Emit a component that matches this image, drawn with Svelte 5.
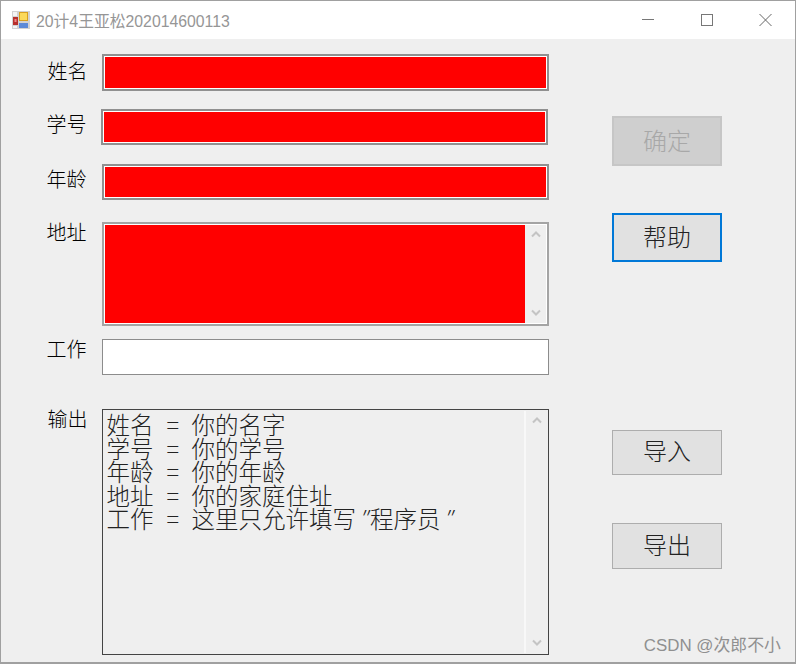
<script>
  const fields = [
    { label: '姓名', cls: 'name', filled: true },
    { label: '学号', cls: 'sid', filled: true },
    { label: '年龄', cls: 'age', filled: true }
  ];
  const output = [
    ['姓名', '你的名字'],
    ['学号', '你的学号'],
    ['年龄', '你的年龄'],
    ['地址', '你的家庭住址'],
    ['工作', '这里只允许填写', '程序员']
  ];
</script>

<div class="window">
  <header class="titlebar">
    <svg class="appicon" width="20" height="20" viewBox="0 0 20 20">
      <rect x="1" y="1" width="18" height="18" fill="#d2d2d2" />
      <rect x="2" y="2" width="4" height="4" fill="#f4f4f4" />
      <rect x="2" y="7" width="5" height="8" fill="#b8302c" />
      <rect x="3.5" y="9" width="2" height="3" fill="#e88" />
      <rect x="8" y="2" width="9" height="9" fill="#d8a020" />
      <rect x="9" y="3" width="7" height="7" fill="#fbd95a" />
      <rect x="8" y="13" width="9" height="5" fill="#5c8ad8" />
      <rect x="2" y="16" width="4" height="2" fill="#f4f4f4" />
    </svg>
    <span class="title">20计4王亚松202014600113</span>
    <div class="controls">
      <svg width="13" height="14" viewBox="0 0 13 14"><path d="M0 6.5h12" stroke="#777" stroke-width="1" /></svg>
      <svg width="13" height="14" viewBox="0 0 13 14"><rect x="0.5" y="1.5" width="11" height="11" fill="none" stroke="#777" /></svg>
      <svg width="13" height="14" viewBox="0 0 13 14"><path d="M0.5 1l12 12M12.5 1L0.5 13" stroke="#666" stroke-width="1" /></svg>
    </div>
  </header>

  <main class="client">
    <section class="form">
      {#each fields as f}
        <div class="row {f.cls}">
          <span class="label">{f.label}</span>
          <div class="box single"><div class="fill"></div></div>
        </div>
      {/each}

      <div class="row addr">
        <span class="label">地址</span>
        <div class="box multi">
          <div class="fill"></div>
          <div class="scroll">
            <svg width="12" height="8" viewBox="0 0 12 8"><path d="M2 6.5l4-4 4 4" fill="none" stroke="#c4c4c4" stroke-width="2" /></svg>
            <svg width="12" height="8" viewBox="0 0 12 8"><path d="M2 1.5l4 4 4-4" fill="none" stroke="#c4c4c4" stroke-width="2" /></svg>
          </div>
        </div>
      </div>

      <div class="row job">
        <span class="label">工作</span>
        <div class="box single white"></div>
      </div>

      <div class="row out">
        <span class="label">输出</span>
        <div class="box multi dark">
          <div class="text">
            {#each output as [k, v, quoted]}
              <div class="line">
                <span class="key">{k}</span><span class="eq">=</span><span>{v}</span>
                {#if quoted}<span class="q">″</span><span>{quoted}</span><span class="q">″</span>{/if}
              </div>
            {/each}
          </div>
          <div class="scroll">
            <svg width="12" height="8" viewBox="0 0 12 8"><path d="M2 6.5l4-4 4 4" fill="none" stroke="#c4c4c4" stroke-width="2" /></svg>
            <svg width="12" height="8" viewBox="0 0 12 8"><path d="M2 1.5l4 4 4-4" fill="none" stroke="#c4c4c4" stroke-width="2" /></svg>
          </div>
        </div>
      </div>
    </section>

    <aside class="actions">
      <button class="btn ok" disabled><span>确定</span></button>
      <button class="btn help"><span>帮助</span></button>
      <button class="btn imp"><span>导入</span></button>
      <button class="btn exp"><span>导出</span></button>
    </aside>
  </main>

  <span class="mark">CSDN @次郎不小</span>
</div>

<style>
  :global(body) {
    margin: 0;
    background: #efefef;
  }
  .window {
    position: relative;
    width: 796px;
    height: 664px;
    box-sizing: border-box;
    border: 1px solid #a0a0a0;
    border-bottom-width: 2px;
    background: #efefef;
    overflow: hidden;
    font-family: "Noto Sans CJK SC", "Liberation Sans", sans-serif;
    color: #1a1a1a;
  }
  .titlebar {
    display: flex;
    align-items: center;
    height: 38px;
    background: #fff;
    padding-left: 10px;
  }
  .appicon {
    margin-right: 5px;
  }
  .title {
    font-family: "Liberation Sans", "Noto Sans CJK SC", sans-serif;
    font-size: 15.8px;
    color: #969696;
  }
  .controls {
    margin-left: auto;
    display: flex;
    gap: 45.5px;
    padding-right: 23px;
  }
  .client {
    display: flex;
  }
  .form {
    width: 548px;
    padding-top: 15px;
  }
  .row {
    display: flex;
  }
  .label {
    width: 101px;
    box-sizing: border-box;
    padding-left: 45.5px;
    font-size: 20px;
    font-weight: 300;
    color: #000;
    line-height: 28px;
    flex: none;
  }
  .box {
    box-sizing: border-box;
    width: 447px;
    border: 2px solid #9c9c9c;
    background: #fff;
    padding: 1px;
    display: flex;
  }
  .single {
    height: 36px;
  }
  .white {
    padding: 0;
    border-width: 1.5px;
    border-color: #8c8c8c;
  }
  .fill {
    flex: 1;
    background: #f00;
  }
  .name .label {
    padding-top: 3px;
    padding-left: 46.5px;
  }
  .name .box {
    height: 37px;
    border-color: #909090;
  }
  .sid {
    margin-top: 18px;
  }
  .sid .label {
    padding-top: 1px;
  }
  .sid .box {
    margin-left: -1px;
    border-color: #909090;
  }
  .age {
    margin-top: 19px;
  }
  .age .label {
    padding-top: 1px;
  }
  .age .box {
    border-color: #909090;
  }
  .addr {
    margin-top: 22px;
  }
  .addr .box {
    height: 104px;
    border-color: #a4a4a4;
  }
  .addr .label {
    margin-top: -4px;
  }
  .multi .scroll {
    width: 21px;
    flex: none;
    display: flex;
    flex-direction: column;
    justify-content: space-between;
    align-items: center;
    padding: 5px 0 6px;
    background: #efefef;
    box-sizing: border-box;
  }
  .job {
    margin-top: 13px;
  }
  .job .label {
    margin-top: -4px;
  }
  .out {
    margin-top: 34px;
  }
  .out .label {
    margin-top: -4px;
    padding-left: 46.5px;
  }
  .out .box {
    height: 246px;
    border-width: 1.5px;
  }
  .dark {
    border-color: #444;
    background: #efefef;
  }
  .dark .scroll {
    border-left: 2px solid #f8f8f8;
    width: 23px;
  }
  .text {
    flex: 1;
    padding: 2px 0 0 2.5px;
    font-size: 23.5px;
    font-weight: 300;
    line-height: 23.5px;
    color: #222;
    white-space: nowrap;
  }
  .line {
    display: flex;
    height: 23.5px;
  }
  .key {
    width: 60px;
    flex: none;
  }
  .eq {
    width: 25px;
    flex: none;
  }
  .q {
    width: 14px;
    flex: none;
    text-align: center;
    font-style: italic;
  }
  .actions {
    display: flex;
    flex-direction: column;
    align-items: flex-start;
    padding-left: 63px;
  }
  .btn {
    width: 110px;
    box-sizing: border-box;
    border: 1px solid #adadad;
    background: #e1e1e1;
    font-family: "Noto Sans CJK SC", sans-serif;
    font-weight: 300;
    font-size: 24px;
    line-height: 30px;
    color: #222;
    padding: 0;
  }
  .btn span {
    display: block;
    margin-top: -3px;
  }
  .ok {
    margin-top: 77px;
    height: 50px;
    background: #cfcfcf;
    border: 2px solid #c6c6c6;
    color: #a8a8a8;
  }
  .help {
    margin-top: 47px;
    height: 49px;
    border: 2.5px solid #0078d7;
  }
  .imp {
    margin-top: 168px;
    height: 45px;
  }
  .imp span {
    margin-top: -6px;
  }
  .exp {
    margin-top: 48px;
    height: 46px;
  }
  .exp span {
    margin-top: -5px;
  }
  .mark {
    position: absolute;
    right: 14px;
    bottom: 6px;
    font-size: 16.9px;
    line-height: 20px;
    color: #909090;
    font-family: "Liberation Sans", "Noto Sans CJK SC", sans-serif;
  }
</style>
